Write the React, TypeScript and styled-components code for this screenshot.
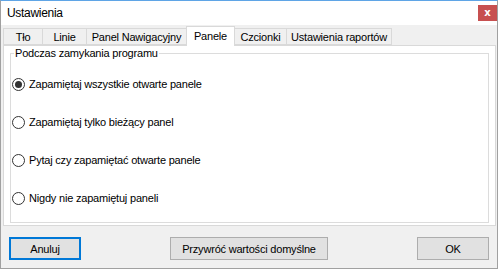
import React, { useState } from 'react'
import styled, { createGlobalStyle } from 'styled-components'

const GlobalStyle = createGlobalStyle`
   html, body {
      margin: 0;
      padding: 0;
      background: #ffffff;
   }
   body {
      font-family: 'Liberation Sans', Arial, sans-serif;
      font-size: 11px;
      letter-spacing: -0.2px;
      color: #000;
   }
`

const tabs = [
   { label: 'Tło', width: 40 },
   { label: 'Linie', width: 45 },
   { label: 'Panel Nawigacyjny', width: 101 },
   { label: 'Panele', width: 49 },
   { label: 'Czcionki', width: 53 },
   { label: 'Ustawienia raportów', width: 106 },
]
const options = [
   'Zapamiętaj wszystkie otwarte panele',
   'Zapamiętaj tylko bieżący panel',
   'Pytaj czy zapamiętać otwarte panele',
   'Nigdy nie zapamiętuj paneli',
]

const App = () => {
   const [active, setActive] = useState(3)
   const [choice, setChoice] = useState(0)
   return (
      <>
         <GlobalStyle />
         <Window>
            <TitleBar>
               <Title>Ustawienia</Title>
               <Close>x</Close>
            </TitleBar>
            <Body>
               <TabRow>
                  {tabs.map((t, i) => (
                     <Tab key={t.label} width={t.width} selected={i === active} onClick={() => setActive(i)}>
                        {t.label}
                     </Tab>
                  ))}
               </TabRow>
               <Panel>
                  <Group>
                     <Legend>Podczas zamykania programu</Legend>
                     {options.map((label, i) => (
                        <Option key={label} onClick={() => setChoice(i)}>
                           <Radio checked={i === choice} />
                           {label}
                        </Option>
                     ))}
                  </Group>
               </Panel>
               <Buttons>
                  <Button width={72} focused>
                     Anuluj
                  </Button>
                  <Button width={158}>Przywróć wartości domyślne</Button>
                  <Button width={72}>OK</Button>
               </Buttons>
            </Body>
         </Window>
      </>
   )
}

const Window = styled('div')`
   width: 498px;
   height: 269px;
   box-sizing: border-box;
   border: 1px solid #a0a0a0;
   border-top: 1px solid #5fa5e6;
   background: #f0f0f0;
   display: flex;
   flex-direction: column;
`
const TitleBar = styled('div')`
   height: 24px;
   background: #ffffff;
   display: flex;
   align-items: flex-start;
   justify-content: space-between;
`
const Title = styled('span')`
   font-size: 12px;
   letter-spacing: -0.3px;
   margin: 5px 0 0 6px;
`
const Close = styled('span')`
   width: 19px;
   height: 16px;
   margin-top: 4px;
   background: #c75050;
   color: #fff;
   font-weight: bold;
   font-size: 10px;
   line-height: 15px;
   text-align: center;
   letter-spacing: 0;
   font-family: 'DejaVu Sans', sans-serif;
`
const Body = styled('div')`
   flex: 1;
   padding: 1px 2px 0 2px;
   display: flex;
   flex-direction: column;
`
const TabRow = styled('div')`
   display: flex;
   height: 20px;
   align-items: flex-end;
   position: relative;
   z-index: 1;
   margin-bottom: -1px;
`
const Tab = styled('div')<{ width: number; selected?: boolean }>`
   box-sizing: border-box;
   width: ${(p) => p.width}px;
   height: ${(p) => (p.selected ? '20px' : '17px')};
   margin-bottom: ${(p) => (p.selected ? '0' : '1px')};
   padding-top: ${(p) => (p.selected ? '2px' : '1px')};
   border: 1px solid #d9d9d9;
   border-bottom: ${(p) => (p.selected ? 'none' : '1px solid #d9d9d9')};
   margin-left: -1px;
   &:first-child {
      margin-left: 0;
   }
   background: ${(p) => (p.selected ? '#ffffff' : '#f0f0f0')};
   line-height: 14px;
   text-align: center;
   white-space: nowrap;
   cursor: default;
   position: relative;
   z-index: ${(p) => (p.selected ? 2 : 1)};
`
const Panel = styled('div')`
   box-sizing: border-box;
   width: 493px;
   height: 181px;
   border: 1px solid #d9d9d9;
   background: #ffffff;
   padding: 0 6px;
   display: flex;
`
const Group = styled('fieldset')`
   flex: 1;
   margin: 0;
   height: 177px;
   box-sizing: border-box;
   border: 1px solid #dcdcdc;
   padding: 18px 0 0 1px;
   display: flex;
   flex-direction: column;
   gap: 25px;
`
const Legend = styled('legend')`
   padding: 0 1px;
   margin-left: 2px;
   line-height: 14px;
`
const Option = styled('label')`
   display: flex;
   align-items: center;
   gap: 4px;
   height: 13px;
   line-height: 13px;
   cursor: default;
`
const Radio = styled('span')<{ checked?: boolean }>`
   width: 13px;
   height: 13px;
   box-sizing: border-box;
   border: 1px solid #333333;
   border-radius: 50%;
   background: #fff;
   display: flex;
   align-items: center;
   justify-content: center;
   &::after {
      content: '';
      width: 7px;
      height: 7px;
      border-radius: 50%;
      background: ${(p) => (p.checked ? '#333333' : 'transparent')};
   }
`
const Buttons = styled('div')`
   display: flex;
   justify-content: space-between;
   padding: 11px 6px 0 6px;
`
const Button = styled('button')<{ width: number; focused?: boolean }>`
   width: ${(p) => p.width}px;
   height: 23px;
   box-sizing: border-box;
   background: #e1e1e1;
   border: ${(p) => (p.focused ? '2px solid #0078d7' : '1px solid #adadad')};
   font-family: 'Liberation Sans', Arial, sans-serif;
   font-size: 11px;
   letter-spacing: -0.2px;
   color: #000;
   padding: 0;
`

export default App
